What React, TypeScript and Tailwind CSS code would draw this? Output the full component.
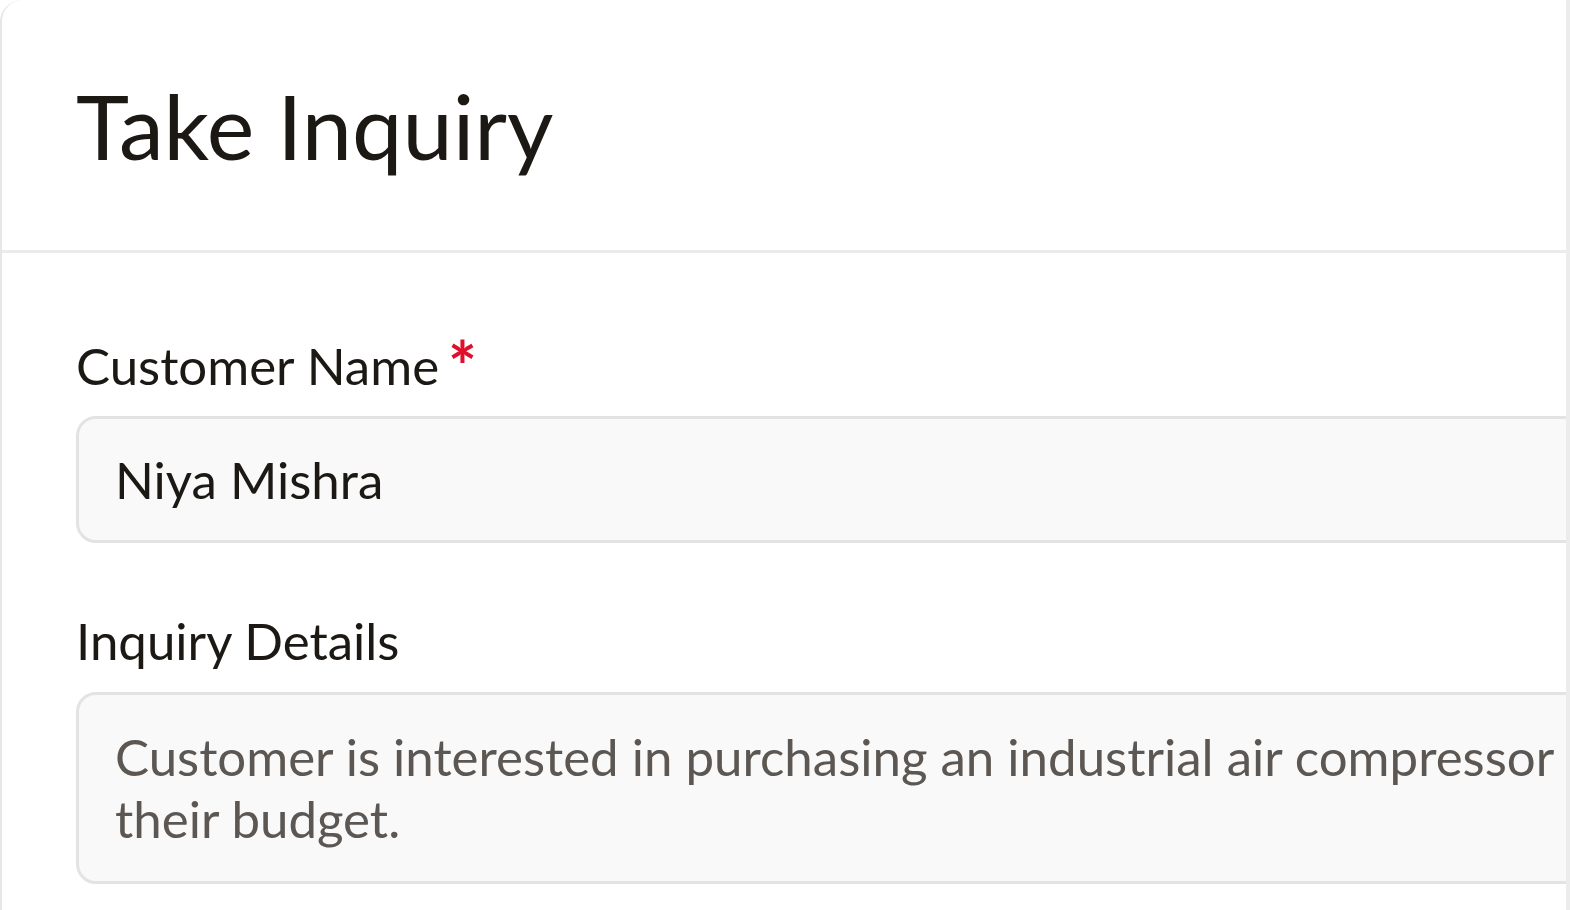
import React from 'react';

const font = { fontFamily: 'Lato, "Open Sans", sans-serif' };

function FieldLabel({ children, required }: { children: React.ReactNode; required?: boolean }) {
  return (
    <div className="flex h-[51px] items-start text-[51px] leading-none text-[#1c1915]">
      <span>{children}</span>
      {required && (
        <span className="-mt-[8px] ml-[9px] text-[68px] font-bold leading-none text-[#e0102b]">*</span>
      )}
    </div>
  );
}

export default function App() {
  return (
    <div className="flex h-[910px] w-[1570px] overflow-hidden bg-white" style={font}>
      <div className="min-w-0 flex-1 overflow-hidden">
        <div className="flex h-full w-[1800px] flex-col rounded-tl-[22px] border-l-2 border-[#e7e7e7] bg-white">
          <header className="h-[253px] shrink-0 border-b-[3px] border-[#ebebeb] pl-[74px] pt-[80px]">
            <h1 className="text-[90px] leading-none text-[#1c1915]">Take Inquiry</h1>
          </header>

          <div className="flex flex-col pl-[74px] pt-[87px]">
            <FieldLabel required>Customer Name</FieldLabel>
            <div className="mt-[25px] flex h-[127px] items-center rounded-[20px] border-[3px] border-[#e3e3e3] bg-[#f9f9f9] pl-[36px]">
              <span className="text-[51px] leading-none text-[#1c1915]">Niya Mishra</span>
            </div>

            <div className="mt-[72px]">
              <FieldLabel>Inquiry Details</FieldLabel>
            </div>
            <div className="mt-[26px] h-[192px] rounded-[20px] border-[3px] border-[#e3e3e3] bg-[#f9f9f9] pl-[36px] pt-[31px] text-[51px] leading-[62px] text-[#5c5752]">
              <div className="whitespace-nowrap">Customer is interested in purchasing an industrial air compressor</div>
              <div className="whitespace-nowrap">their budget.</div>
            </div>
          </div>
        </div>
      </div>
      <div className="w-[4px] shrink-0 bg-[#ececec]" />
    </div>
  );
}
